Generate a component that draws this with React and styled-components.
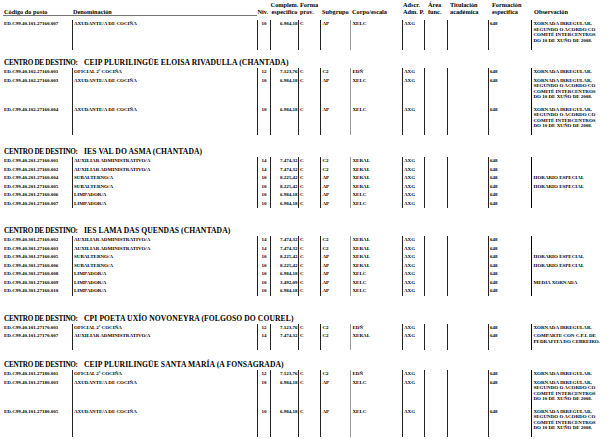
import React from 'react';
import styled, { createGlobalStyle } from 'styled-components';

const COLS = '72px 185px 13px 28px 22px 30px 52px 22px 23px 41px 43px 85px';

const GlobalStyle = createGlobalStyle`
  *, *::before, *::after { box-sizing: border-box; }
  html, body { margin: 0; padding: 0; background: #fff; }
  body {
    font-family: "Liberation Serif", "Times New Roman", serif;
    font-weight: 700;
    color: #000;
  }
`;

const Page = styled.div`
  width: 616px;
  height: 439px;
  overflow: hidden;
  background: #fff;
`;

const HeaderRow = styled.div`
  display: grid;
  grid-template-columns: ${COLS};
  height: 16px;
  font-size: 6.3px;
  line-height: 6.5px;
`;

const HeadCell = styled.div`
  display: flex;
  flex-direction: column;
  justify-content: flex-end;
  align-items: ${p => (p.$align === 'center' ? 'center' : 'flex-start')};
  padding-left: ${p => p.$pl ?? 1}px;
  padding-bottom: ${p => (p.$rule ? 0 : 0.75)}px;
  margin-left: ${p => p.$ml ?? 0}px;
  border-bottom: ${p => (p.$rule ? '1px solid #777' : 'none')};
  white-space: nowrap;
`;

const Section = styled.section`
  margin-top: ${p => p.$gap}px;
`;

const SectionTitle = styled.h2`
  margin: 0 0 1px;
  height: 8px;
  line-height: 8px;
  padding-left: 4px;
  display: flex;
  align-items: baseline;
  font-weight: 700;
  white-space: nowrap;
`;

const TitleLabel = styled.span`
  width: 80px;
  font-size: 7.2px;
  letter-spacing: -0.3px;
`;

const TitleName = styled.span`
  font-size: 7.6px;
  letter-spacing: 0.1px;
`;

const Row = styled.div`
  display: grid;
  grid-template-columns: ${COLS};
  height: ${p => p.$h}px;
  font-size: 5px;
  line-height: 6px;
`;

const LINES = {
  solid: '1px solid #222',
  gray: '1px solid #9a9a9a',
  thick: '1.6px solid #000',
};

const Cell = styled.div`
  padding-top: 1px;
  padding-left: ${p => p.$pl ?? 1}px;
  padding-right: ${p => p.$pr ?? 0}px;
  text-align: ${p => p.$align || 'left'};
  border-left: ${p => LINES[p.$line] || 'none'};
  white-space: nowrap;
  overflow: hidden;
`;

const ObsLine = styled.div`
  line-height: 5.6px;
  &:first-child { margin-top: 0.2px; }
`;

const AX = 'AXUDANTE/A DE COCIÑA';
const OF = 'OFICIAL 2ª COCIÑA';
const AUX = 'AUXILIAR ADMINISTRATIVO/A';
const SUB = 'SUBALTERNO/A';
const LIM = 'LIMPADOR/A';
const XI = ['XORNADA IRREGULAR,', 'SEGUNDO O ACORDO CO', 'COMITÉ INTERCENTROS', 'DO 10 DE XUÑO DE 2008.'];
const XI1 = ['XORNADA IRREGULAR.'];
const HE = ['HORARIO ESPECIAL'];

const r = (code, denom, niv, comp, sub, corpo, obs = [], h = 8.5) => ({ code, denom, niv, comp, sub, corpo, obs, h });

const sections = [
  {
    gap: 4,
    title: null,
    rows: [r('ED.C99.40.101.27160.007', AX, '10', '6.984,18', 'AP', 'XELC', XI, 30)],
  },
  {
    gap: 9,
    title: 'CEIP PLURILINGÜE ELOISA RIVADULLA (CHANTADA)',
    rows: [
      r('ED.C99.40.102.27160.001', OF, '12', '7.123,76', 'C2', 'EDÑ', XI1),
      r('ED.C99.40.102.27160.003', AX, '10', '6.984,18', 'AP', 'XELC', XI, 29),
      r('ED.C99.40.102.27160.004', AX, '10', '6.984,18', 'AP', 'XELC', XI, 29),
    ],
  },
  {
    gap: 13.5,
    title: 'IES VAL DO ASMA (CHANTADA)',
    rows: [
      r('ED.C99.40.201.27160.001', AUX, '14', '7.474,32', 'C2', 'XERAL'),
      r('ED.C99.40.201.27160.002', AUX, '14', '7.474,32', 'C2', 'XERAL'),
      r('ED.C99.40.201.27160.004', SUB, '10', '8.225,42', 'AP', 'XERAL', HE),
      r('ED.C99.40.201.27160.005', SUB, '10', '8.225,42', 'AP', 'XERAL', HE),
      r('ED.C99.40.201.27160.006', LIM, '10', '6.984,18', 'AP', 'XELC'),
      r('ED.C99.40.201.27160.007', LIM, '10', '6.984,18', 'AP', 'XELC'),
    ],
  },
  {
    gap: 19,
    title: 'IES LAMA DAS QUENDAS (CHANTADA)',
    rows: [
      r('ED.C99.40.301.27160.002', AUX, '14', '7.474,32', 'C2', 'XERAL'),
      r('ED.C99.40.301.27160.003', AUX, '14', '7.474,32', 'C2', 'XERAL'),
      r('ED.C99.40.301.27160.005', SUB, '10', '8.225,42', 'AP', 'XERAL', HE),
      r('ED.C99.40.301.27160.006', SUB, '10', '8.225,42', 'AP', 'XERAL', HE),
      r('ED.C99.40.301.27160.008', LIM, '10', '6.984,18', 'AP', 'XELC'),
      r('ED.C99.40.301.27160.009', LIM, '10', '3.492,09', 'AP', 'XELC', ['MEDIA XORNADA']),
      r('ED.C99.40.301.27160.010', LIM, '10', '6.984,18', 'AP', 'XELC'),
    ],
  },
  {
    gap: 19,
    title: 'CPI POETA UXÍO NOVONEYRA (FOLGOSO DO COUREL)',
    rows: [
      r('ED.C99.40.101.27170.001', OF, '12', '7.123,76', 'C2', 'EDÑ', XI1),
      r('ED.C99.40.101.27170.007', AUX, '14', '7.474,32', 'C2', 'XERAL', ['COMPARTE CON C.P.I. DE', 'PEDRAFITA DO CEBREIRO.'], 18),
    ],
  },
  {
    gap: 11,
    title: 'CEIP PLURILINGÜE SANTA MARÍA (A FONSAGRADA)',
    rows: [
      r('ED.C99.40.101.27180.001', OF, '12', '7.123,76', 'C2', 'EDÑ', XI1),
      r('ED.C99.40.101.27180.003', AX, '10', '6.984,18', 'AP', 'XELC', XI, 29),
      r('ED.C99.40.101.27180.005', AX, '10', '6.984,18', 'AP', 'XELC', XI, 29),
    ],
  },
];

function Header() {
  return (
    <HeaderRow>
      <HeadCell $rule $ml={3} $pl={1}>
        <span>Código do posto</span>
      </HeadCell>
      <HeadCell $rule $pl={1}>
        <span>Denominación</span>
      </HeadCell>
      <HeadCell $pl={0.5}>
        <span>Niv.</span>
      </HeadCell>
      <HeadCell $pl={1} $align="center">
        <span>Complem.</span>
        <span>específico</span>
      </HeadCell>
      <HeadCell $pl={2}>
        <span>Forma</span>
        <span>prov.</span>
      </HeadCell>
      <HeadCell $pl={2}>
        <span>Subgrupo</span>
      </HeadCell>
      <HeadCell $pl={2}>
        <span>Corpo/escala</span>
      </HeadCell>
      <HeadCell $pl={1}>
        <span>Adscr.</span>
        <span>Adm. P.</span>
      </HeadCell>
      <HeadCell $pl={4}>
        <span>Área</span>
        <span>func.</span>
      </HeadCell>
      <HeadCell $pl={3}>
        <span>Titulación</span>
        <span>académica</span>
      </HeadCell>
      <HeadCell $pl={4}>
        <span>Formación</span>
        <span>específica</span>
      </HeadCell>
      <HeadCell $pl={3}>
        <span>Observación</span>
      </HeadCell>
    </HeaderRow>
  );
}

function DataRow({ row }) {
  return (
    <Row $h={row.h}>
      <Cell $pl={4}>{row.code}</Cell>
      <Cell $line="solid">{row.denom}</Cell>
      <Cell $line="solid" $align="center" $pl={0}>{row.niv}</Cell>
      <Cell $line="solid" $align="right" $pr={0.5}>{row.comp}</Cell>
      <Cell $line="solid" $pl={1}>C</Cell>
      <Cell $line="solid" $pl={1.5}>{row.sub}</Cell>
      <Cell $line="gray" $pl={1.5}>{row.corpo}</Cell>
      <Cell $line="solid" $pl={1}>AXG</Cell>
      <Cell $line="solid" />
      <Cell $line="solid" />
      <Cell $line="solid" $pl={1}>648</Cell>
      <Cell $line="thick" $pl={1.5}>
        {row.obs.map(t => (
          <ObsLine key={t}>{t}</ObsLine>
        ))}
      </Cell>
    </Row>
  );
}

export default function App() {
  return (
    <>
      <GlobalStyle />
      <Page>
        <Header />
        {sections.map((s, i) => (
          <Section key={i} $gap={s.gap}>
            {s.title && (
              <SectionTitle>
                <TitleLabel>CENTRO DE DESTINO:</TitleLabel>
                <TitleName>{s.title}</TitleName>
              </SectionTitle>
            )}
            {s.rows.map(row => (
              <DataRow key={row.code} row={row} />
            ))}
          </Section>
        ))}
      </Page>
    </>
  );
}
